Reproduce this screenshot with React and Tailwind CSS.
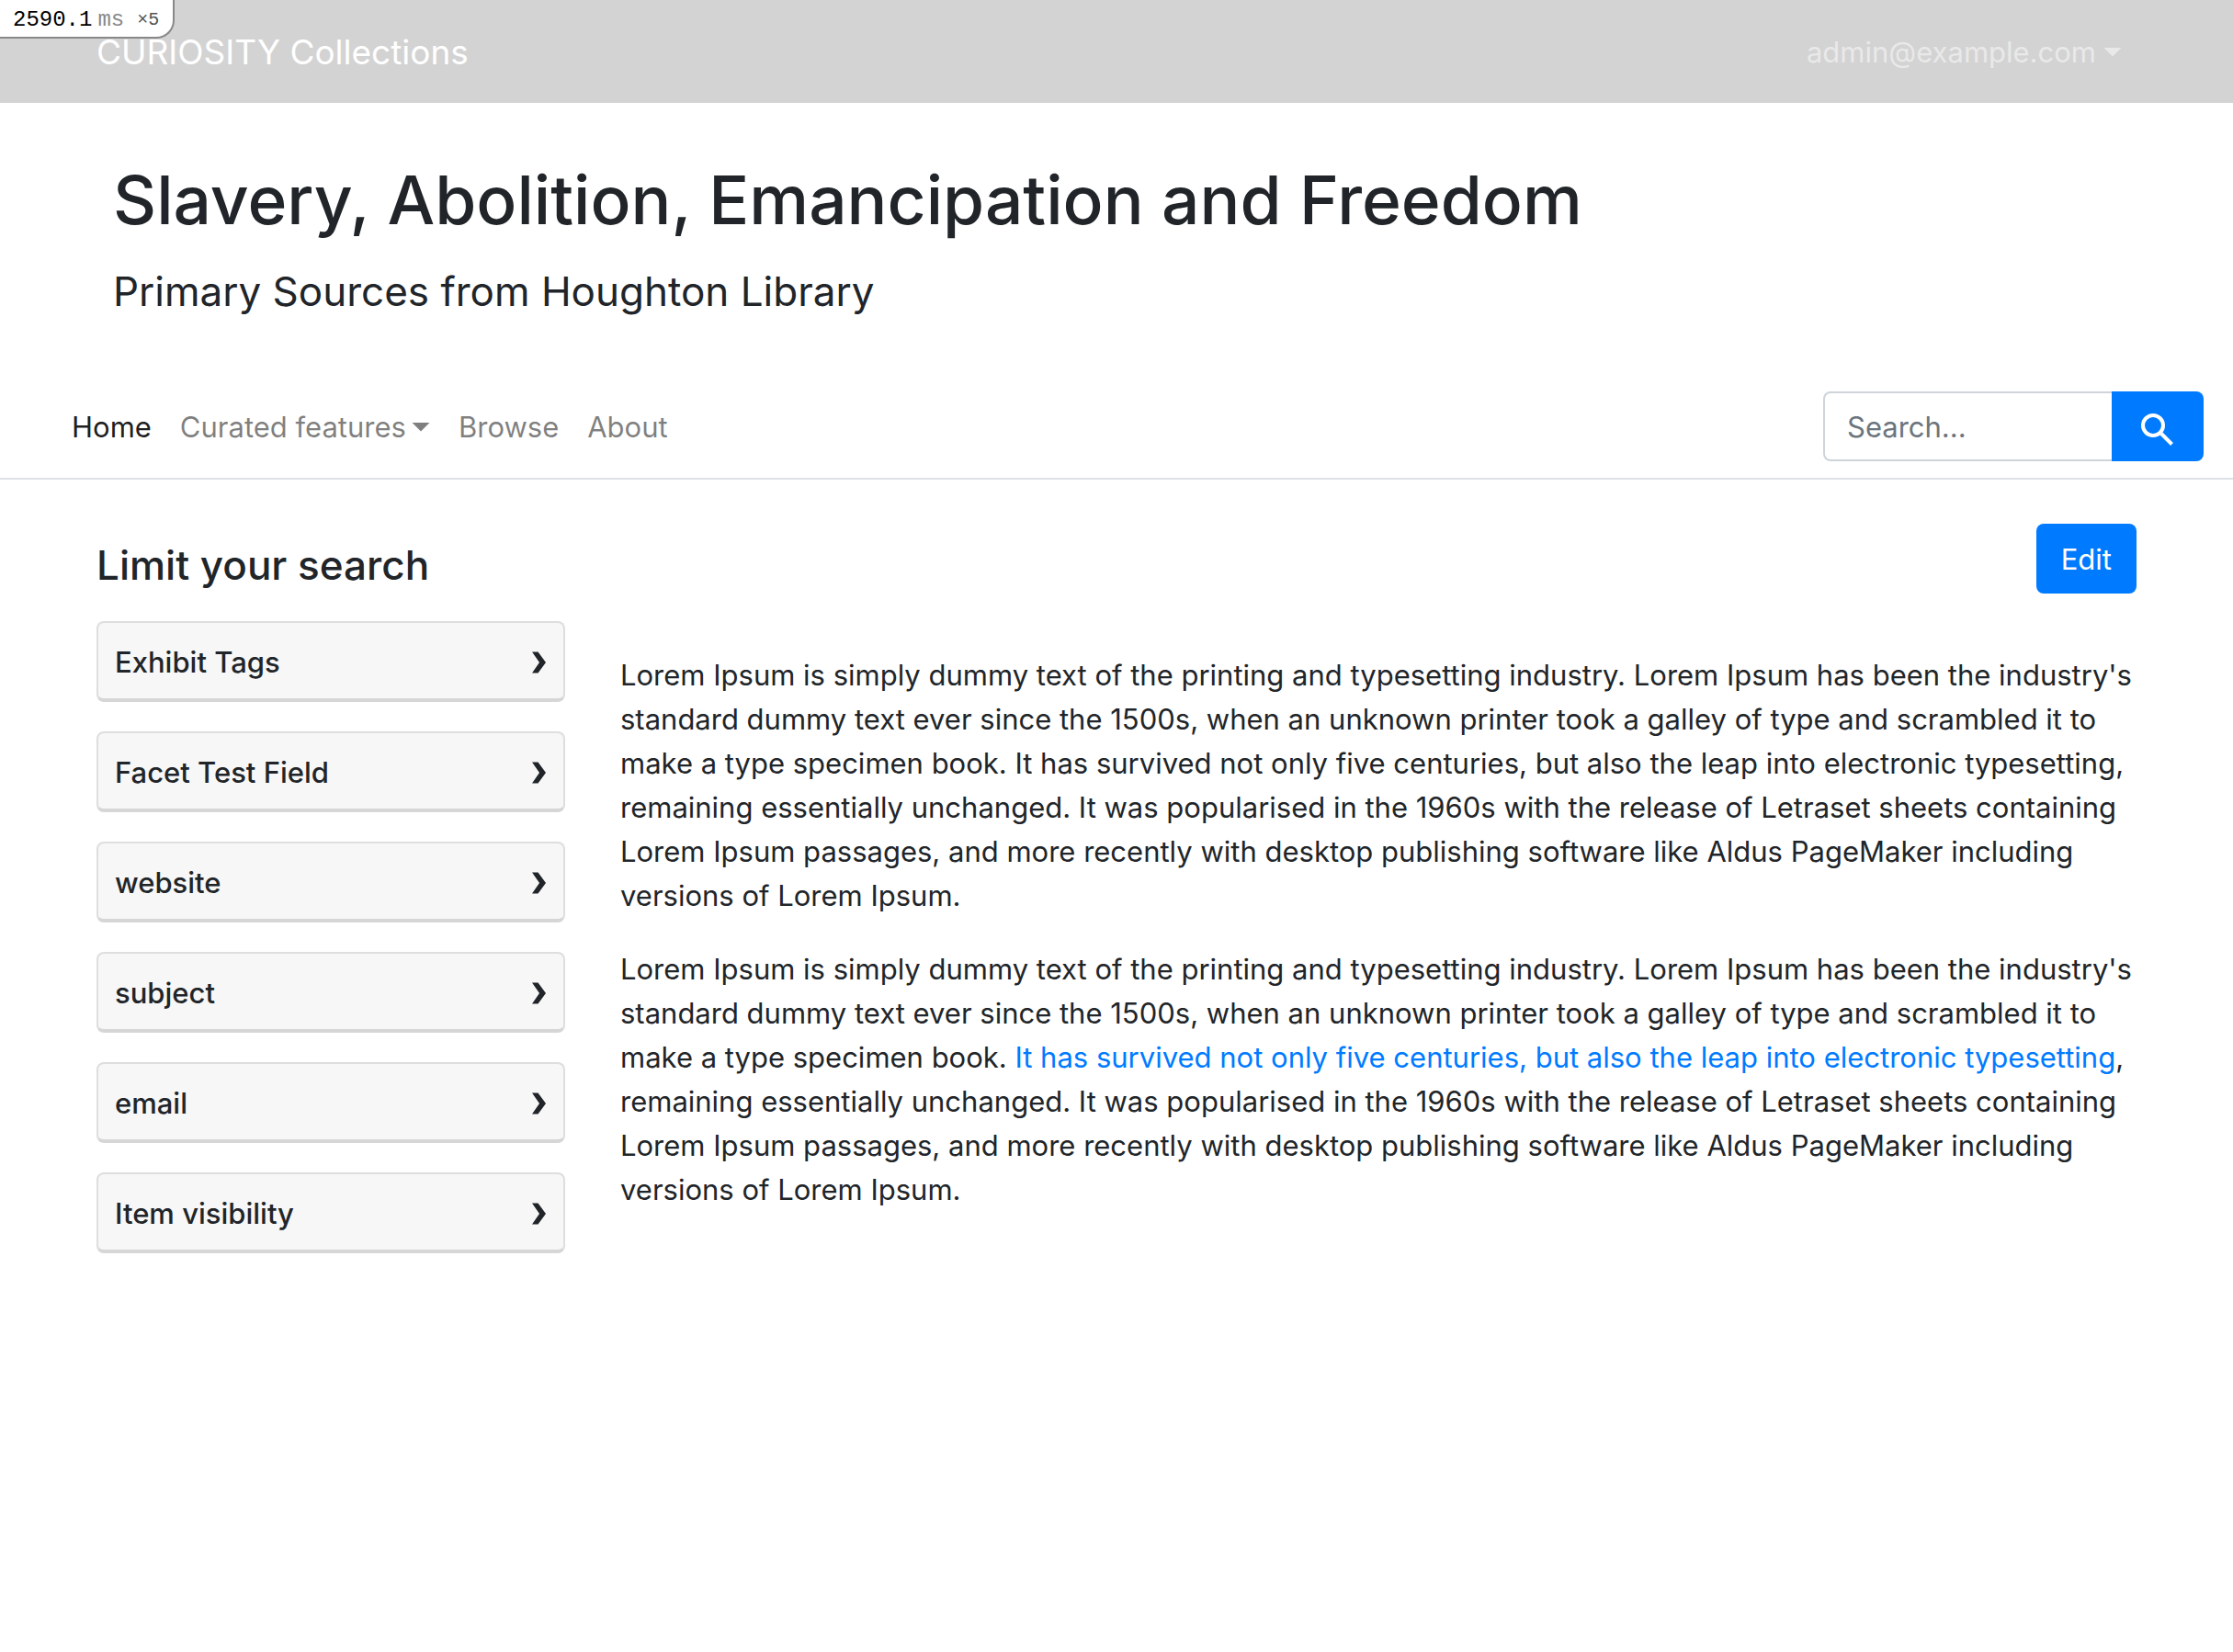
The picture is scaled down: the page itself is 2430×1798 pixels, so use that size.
const facets = ['Exhibit Tags', 'Facet Test Field', 'website', 'subject', 'email', 'Item visibility'];

function Caret() {
  return (
    <svg className="h-[10px] w-5 shrink-0" viewBox="0 0 20 10" fill="currentColor" aria-hidden="true">
      <path d="M.5 0h19L10 9.6z" />
    </svg>
  );
}

function TimingBadge() {
  return (
    <div className="absolute top-0 left-0 flex h-[42px] w-[190px] items-center rounded-br-[20px] border-r-2 border-b-2 border-[#888] bg-white pt-1 pl-[14px] font-['Liberation_Mono',monospace] text-[24px] text-black">
      <span>2590.1</span>
      <span className="ml-[6px] text-[#888]">ms</span>
      <span className="ml-[14px] text-[20px] text-[#555]">×5</span>
    </div>
  );
}

function TopBar() {
  return (
    <header className="flex h-28 items-center justify-between bg-[#d3d3d3] px-[105px]">
      <a href="#home" className="pt-[2px] text-[37px] leading-[60px] text-white">CURIOSITY Collections</a>
      <button type="button" className="mr-4 flex items-center gap-2 pt-[2px] text-[31px] leading-[48px] text-white/50">
        admin@example.com
        <Caret />
      </button>
    </header>
  );
}

function Masthead() {
  return (
    <div className="px-[123px] pt-[58px]">
      <h1 className="text-[73px] leading-[96px] font-medium">Slavery, Abolition, Emancipation and Freedom</h1>
      <p className="mt-[22px] text-[44px] leading-[58px]">Primary Sources from Houghton Library</p>
    </div>
  );
}

function ExhibitNav() {
  return (
    <nav className="mt-20 flex items-center justify-between border-b-2 border-[#dee2e6] pr-8 pb-[18px] pl-[78px] text-[31px] leading-[48px]">
      <div className="flex items-center gap-[31px] pt-[2px] text-black/50">
        <a href="#home" className="text-black/90">Home</a>
        <button type="button" className="flex items-center gap-[6px]">
          Curated features
          <Caret />
        </button>
        <a href="#browse">Browse</a>
        <a href="#about">About</a>
      </div>
      <form className="flex h-[76px]" onSubmit={(e) => e.preventDefault()}>
        <input
          type="text"
          aria-label="Search"
          placeholder="Search..."
          className="w-[314px] rounded-l-lg border-2 border-r-0 border-[#ced4da] px-6 pt-[2px] placeholder:text-[#6c757d]"
        />
        <button type="submit" aria-label="Search" className="flex w-[100px] items-center justify-center rounded-r-lg bg-[#007bff] pt-[6px] text-white">
          <svg className="size-9" viewBox="0 0 36 36" fill="none" stroke="currentColor" strokeWidth="4" aria-hidden="true">
            <circle cx="13" cy="14" r="11" />
            <path d="M22 23l11.5 11.5" />
          </svg>
        </button>
      </form>
    </nav>
  );
}

function FacetButton({ label }) {
  return (
    <button
      type="button"
      className="flex h-[88px] w-full items-center justify-between rounded-lg border-2 border-b-4 border-[#dedede] border-b-[#d6d6d6] bg-[#f7f7f7] px-[18px] pt-[3px] text-left text-[31px] leading-[48px] font-medium"
    >
      {label}
      <svg className="h-6 w-4" viewBox="0 0 16 24" fill="currentColor" aria-hidden="true">
        <path d="M0 .5h6.5L15 12 6.5 23.500H0L8 12z" />
      </svg>
    </button>
  );
}

function Sidebar() {
  return (
    <aside className="w-[510px] shrink-0 pt-4">
      <h2 className="text-[44px] leading-[58px] font-medium">Limit your search</h2>
      <div className="mt-8 flex flex-col gap-8">
        {facets.map((f) => (
          <FacetButton key={f} label={f} />
        ))}
      </div>
    </aside>
  );
}

function Content() {
  return (
    <main className="flex min-w-0 flex-1 flex-col">
      <button type="button" className="h-[76px] self-end rounded-lg bg-[#007bff] px-[27px] pt-[2px] text-[31px] leading-[48px] text-white">
        Edit
      </button>
      <div className="mt-[65px] flex flex-col gap-8 text-[31px] leading-[48px]">
        <p>
          Lorem Ipsum is simply dummy text of the printing and typesetting industry. Lorem Ipsum has been the industry's
          standard dummy text ever since the 1500s, when an unknown printer took a galley of type and scrambled it to make
          a type specimen book. It has survived not only five centuries, but also the leap into electronic typesetting,
          remaining essentially unchanged. It was popularised in the 1960s with the release of Letraset sheets containing
          Lorem Ipsum passages, and more recently with desktop publishing software like Aldus PageMaker including versions
          of Lorem Ipsum.
        </p>
        <p>
          Lorem Ipsum is simply dummy text of the printing and typesetting industry. Lorem Ipsum has been the industry's
          standard dummy text ever since the 1500s, when an unknown printer took a galley of type and scrambled it to make
          a type specimen book.{' '}
          <a href="#survived" className="text-[#007bff]">
            It has survived not only five centuries, but also the leap into electronic typesetting
          </a>
          , remaining essentially unchanged. It was popularised in the 1960s with the release of Letraset sheets
          containing Lorem Ipsum passages, and more recently with desktop publishing software like Aldus PageMaker
          including versions of Lorem Ipsum.
        </p>
      </div>
    </main>
  );
}

export default function App() {
  return (
    <div className="relative min-h-screen bg-white font-['Inter',sans-serif] text-[#212529]">
      <TopBar />
      <TimingBadge />
      <Masthead />
      <ExhibitNav />
      <div className="flex gap-[60px] px-[105px] pt-12">
        <Sidebar />
        <Content />
      </div>
    </div>
  );
}
